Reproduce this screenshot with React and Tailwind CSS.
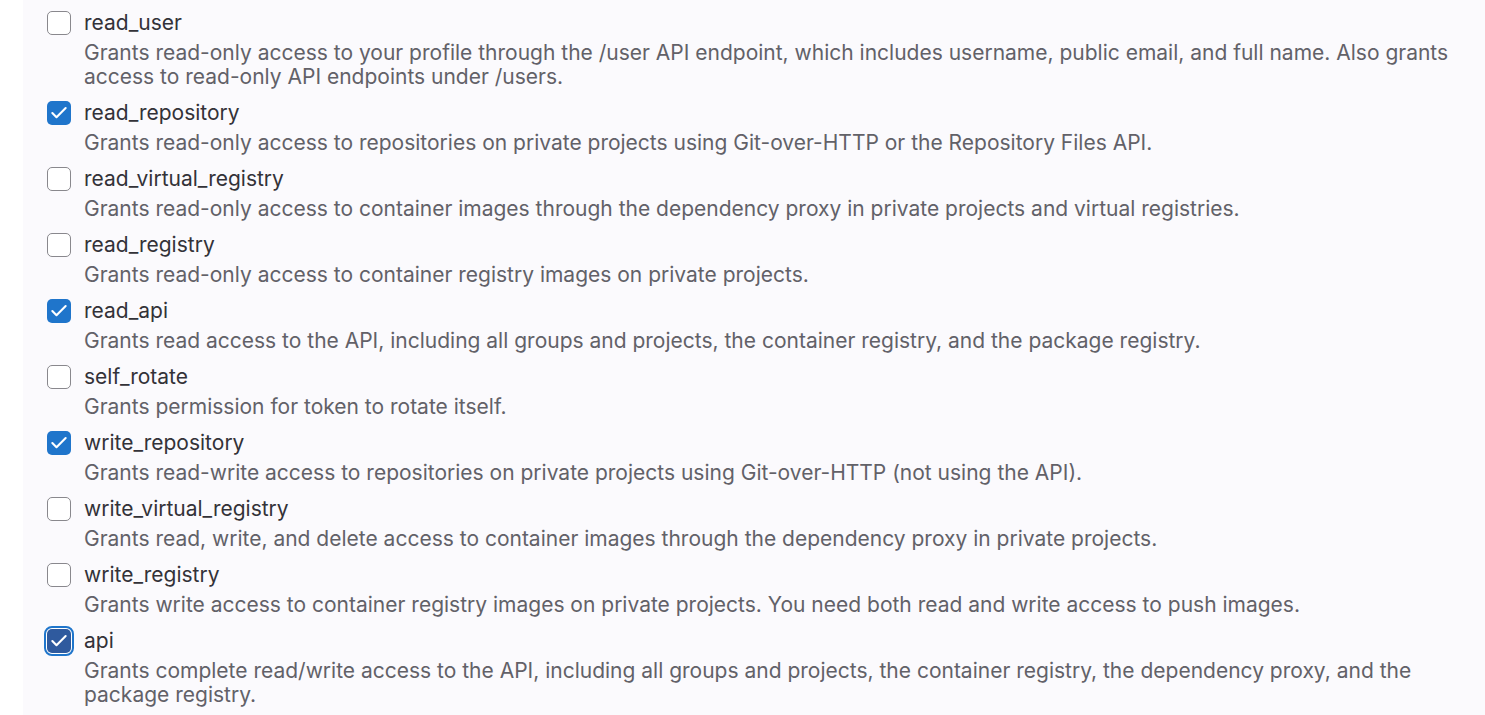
import { Check } from "lucide-react";

const scopes = [
  {
    name: "read_user",
    checked: false,
    desc: "Grants read-only access to your profile through the /user API endpoint, which includes username, public email, and full name. Also grants access to read-only API endpoints under /users.",
  },
  {
    name: "read_repository",
    checked: true,
    desc: "Grants read-only access to repositories on private projects using Git-over-HTTP or the Repository Files API.",
  },
  {
    name: "read_virtual_registry",
    checked: false,
    desc: "Grants read-only access to container images through the dependency proxy in private projects and virtual registries.",
  },
  {
    name: "read_registry",
    checked: false,
    desc: "Grants read-only access to container registry images on private projects.",
  },
  {
    name: "read_api",
    checked: true,
    desc: "Grants read access to the API, including all groups and projects, the container registry, and the package registry.",
  },
  {
    name: "self_rotate",
    checked: false,
    desc: "Grants permission for token to rotate itself.",
  },
  {
    name: "write_repository",
    checked: true,
    desc: "Grants read-write access to repositories on private projects using Git-over-HTTP (not using the API).",
  },
  {
    name: "write_virtual_registry",
    checked: false,
    desc: "Grants read, write, and delete access to container images through the dependency proxy in private projects.",
  },
  {
    name: "write_registry",
    checked: false,
    desc: "Grants write access to container registry images on private projects. You need both read and write access to push images.",
  },
  {
    name: "api",
    checked: true,
    focused: true,
    desc: "Grants complete read/write access to the API, including all groups and projects, the container registry, the dependency proxy, and the package registry.",
  },
];

function Box({ checked, focused }) {
  if (focused) {
    return (
      <span className="flex h-6 w-6 items-center justify-center rounded-[5px] bg-[#2f5a9e] ring-1 ring-white outline-2 outline-offset-1 outline-[#1f75cb] outline">
        <Check className="h-5 w-5 text-white" strokeWidth={2.5} />
      </span>
    );
  }
  if (checked) {
    return (
      <span className="flex h-6 w-6 items-center justify-center rounded-[5px] bg-[#1f75cb]">
        <Check className="h-5 w-5 text-white" strokeWidth={2.5} />
      </span>
    );
  }
  return <span className="block h-6 w-6 rounded-[5px] border border-[#89888d] bg-white" />;
}

export default function App() {
  return (
    <div className="flex min-h-[715px] bg-white font-['Inter',sans-serif]">
      <div className="w-[23px] shrink-0 bg-white" />
      <div className="flex-1 bg-[#fbfafd] pl-6 pr-6 pt-[11px]">
        {scopes.map((s) => (
          <div key={s.name} className="mb-3 flex gap-[13px]">
            <div className="flex h-6 shrink-0 items-center">
              <Box checked={s.checked} focused={s.focused} />
            </div>
            <div className="min-w-0 flex-1">
              <div className="text-[21px] leading-6 text-[#333238]">{s.name}</div>
              <div className="mt-[6px] text-[21px] leading-6 text-[#626168]">{s.desc}</div>
            </div>
          </div>
        ))}
      </div>
    </div>
  );
}
